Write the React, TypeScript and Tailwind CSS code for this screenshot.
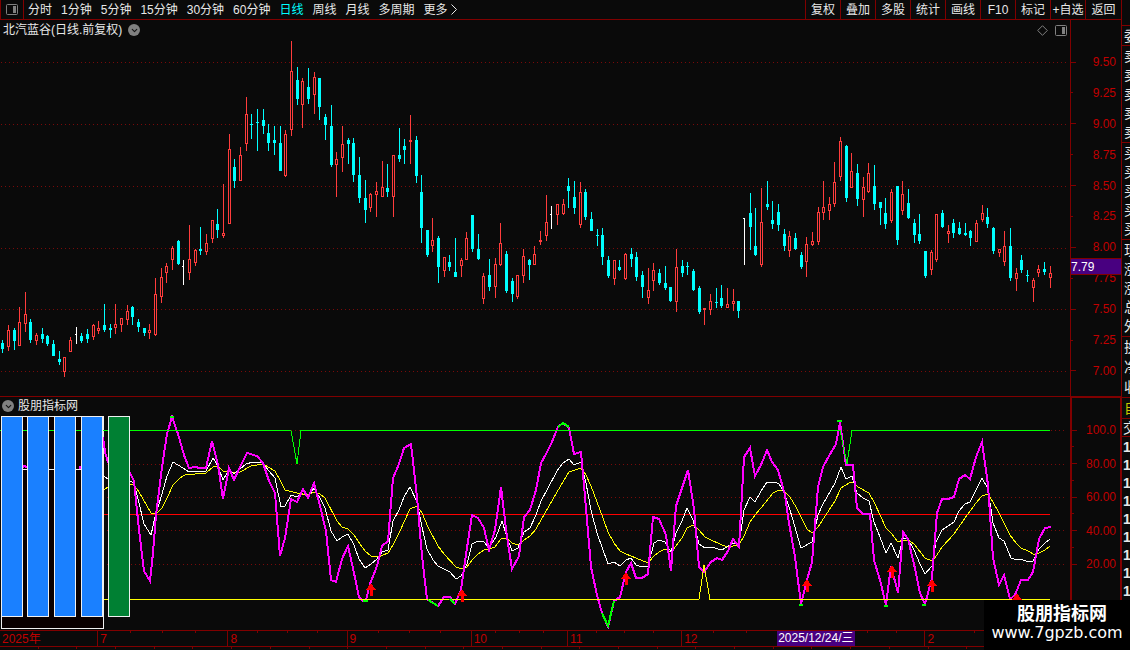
import { ChevronDown } from 'lucide-react';

type Kind = 'u' | 'd' | 'f';
type Candle = [Kind, number, number, number, number];

const periods = [
  '分时',
  '1分钟',
  '5分钟',
  '15分钟',
  '30分钟',
  '60分钟',
  '日线',
  '周线',
  '月线',
  '多周期',
  '更多',
];

const tools = ['复权', '叠加', '多股', '统计', '画线', 'F10', '标记', '+自选', '返回'];

const prices = ['9.50', '9.25', '9.00', '8.75', '8.50', '8.25', '8.00', '7.75', '7.50', '7.25', '7.00'];

const levels = ['100.0', '', '80.00', '', '60.00', '', '40.00', '', '20.00'];

// kind (up, down, flat), high, body top, body bottom, low
const candles: Candle[] = [
  ['d', 340, 343, 349, 353], ['u', 325, 330, 347, 351], ['d', 328, 330, 341, 350], ['u', 307, 322, 346, 346],
  ['u', 292, 314, 324, 332], ['d', 319, 322, 340, 343], ['u', 333, 335, 341, 345], ['d', 328, 334, 339, 343],
  ['d', 335, 336, 344, 346], ['d', 340, 344, 356, 356], ['d', 351, 359, 362, 365], ['u', 357, 357, 372, 377],
  ['u', 337, 340, 352, 352], ['f', 327, 334, 335, 344], ['d', 333, 336, 341, 343], ['d', 329, 334, 339, 343],
  ['u', 324, 325, 337, 340], ['u', 321, 328, 331, 334], ['d', 304, 325, 330, 332], ['d', 324, 328, 330, 338],
  ['u', 304, 324, 328, 334], ['u', 318, 318, 325, 332], ['u', 305, 311, 320, 325], ['d', 306, 307, 317, 325],
  ['d', 319, 322, 327, 332], ['d', 328, 328, 333, 336], ['u', 324, 330, 333, 339], ['u', 278, 294, 335, 336],
  ['u', 268, 277, 297, 303], ['u', 263, 266, 273, 283], ['u', 246, 248, 260, 270], ['d', 240, 241, 264, 265],
  ['f', 260, 266, 267, 285], ['u', 225, 259, 273, 280], ['u', 249, 250, 263, 266], ['d', 227, 249, 251, 255],
  ['u', 234, 243, 252, 255], ['u', 220, 220, 239, 243], ['d', 209, 224, 230, 238], ['u', 184, 233, 236, 238],
  ['u', 134, 149, 224, 224], ['d', 159, 167, 181, 188], ['u', 147, 155, 181, 181], ['u', 97, 114, 144, 151],
  ['d', 114, 124, 125, 139], ['d', 109, 122, 123, 151], ['d', 109, 120, 126, 134], ['d', 124, 133, 143, 151],
  ['d', 126, 140, 143, 155], ['d', 126, 143, 171, 171], ['u', 130, 134, 176, 177], ['u', 41, 71, 130, 136],
  ['d', 67, 80, 99, 105], ['u', 78, 81, 105, 128], ['d', 68, 87, 99, 104], ['u', 72, 77, 95, 114],
  ['d', 78, 78, 107, 120], ['d', 114, 117, 125, 140], ['d', 105, 126, 165, 167], ['u', 152, 159, 165, 197],
  ['u', 126, 144, 158, 172], ['d', 138, 140, 144, 164], ['d', 138, 143, 175, 182], ['d', 157, 175, 198, 203],
  ['d', 180, 198, 210, 223], ['u', 193, 194, 208, 212], ['u', 182, 191, 195, 217], ['u', 161, 187, 197, 197],
  ['d', 164, 188, 192, 197], ['u', 155, 155, 197, 217], ['d', 128, 155, 159, 162], ['d', 139, 146, 150, 164],
  ['u', 115, 140, 142, 164], ['d', 136, 140, 176, 183], ['d', 175, 192, 228, 243], ['d', 230, 230, 255, 257],
  ['u', 218, 240, 246, 252], ['d', 236, 238, 267, 283], ['u', 257, 257, 271, 277], ['d', 255, 262, 267, 271],
  ['d', 238, 272, 277, 277], ['u', 258, 260, 266, 277], ['u', 232, 238, 260, 260], ['d', 215, 215, 249, 252],
  ['d', 234, 249, 259, 260], ['u', 273, 276, 299, 304], ['d', 259, 275, 287, 291], ['u', 258, 264, 287, 298],
  ['u', 223, 243, 265, 266], ['d', 251, 254, 291, 293], ['d', 278, 281, 294, 302], ['u', 275, 275, 297, 299],
  ['u', 249, 256, 276, 283], ['d', 259, 260, 265, 280], ['u', 246, 254, 265, 265], ['u', 231, 240, 242, 245],
  ['u', 195, 222, 236, 241], ['f', 206, 214, 215, 229], ['u', 204, 204, 215, 225], ['u', 199, 204, 214, 215],
  ['d', 178, 186, 191, 208], ['d', 181, 197, 208, 214], ['u', 182, 192, 225, 228], ['d', 189, 192, 217, 220],
  ['d', 212, 219, 231, 231], ['d', 229, 235, 236, 246], ['d', 228, 235, 257, 265], ['d', 256, 260, 276, 278],
  ['u', 260, 260, 279, 285], ['d', 260, 267, 270, 271], ['u', 253, 254, 279, 280], ['d', 248, 254, 259, 267],
  ['d', 252, 257, 277, 281], ['d', 271, 275, 287, 298], ['u', 268, 290, 298, 304], ['u', 263, 270, 281, 291],
  ['d', 269, 273, 283, 285], ['d', 266, 283, 288, 290], ['d', 287, 287, 301, 302], ['u', 249, 267, 302, 312],
  ['d', 260, 266, 273, 277], ['d', 262, 266, 267, 275], ['d', 269, 271, 290, 291], ['d', 286, 288, 312, 314],
  ['u', 308, 308, 310, 325], ['u', 294, 301, 310, 315], ['d', 288, 302, 303, 308], ['d', 285, 298, 306, 308],
  ['u', 288, 304, 308, 308], ['u', 289, 301, 304, 311], ['d', 301, 301, 311, 318], ['f', 218, 218, 219, 265],
  ['d', 193, 213, 227, 250], ['d', 208, 246, 255, 256], ['u', 188, 222, 265, 267], ['d', 181, 204, 207, 210],
  ['d', 201, 220, 224, 229], ['d', 204, 212, 225, 231], ['d', 229, 234, 246, 251], ['u', 231, 236, 251, 257],
  ['d', 233, 238, 249, 250], ['d', 252, 255, 267, 269], ['u', 237, 244, 262, 277], ['u', 232, 241, 245, 246],
  ['u', 207, 212, 242, 245], ['u', 181, 207, 213, 220], ['u', 197, 204, 211, 220], ['u', 162, 182, 204, 207],
  ['u', 137, 141, 177, 181], ['d', 145, 146, 198, 202], ['u', 153, 171, 188, 188], ['d', 164, 173, 199, 206],
  ['u', 177, 187, 200, 217], ['u', 163, 173, 192, 193], ['d', 165, 186, 204, 210], ['d', 202, 202, 208, 225],
  ['d', 198, 213, 224, 229], ['u', 189, 192, 221, 223], ['d', 186, 186, 240, 245], ['u', 181, 194, 211, 215],
  ['d', 189, 203, 218, 219], ['d', 219, 223, 235, 243], ['d', 214, 234, 241, 244], ['d', 251, 251, 276, 278],
  ['u', 250, 252, 270, 275], ['u', 214, 214, 260, 262], ['d', 210, 213, 227, 228], ['u', 225, 231, 234, 243],
  ['d', 219, 223, 233, 238], ['d', 222, 228, 234, 235], ['d', 223, 233, 235, 236], ['d', 230, 231, 238, 246],
  ['u', 220, 223, 242, 242], ['u', 205, 213, 220, 222], ['d', 208, 217, 224, 228], ['d', 227, 228, 251, 254],
  ['u', 249, 249, 253, 257], ['u', 231, 246, 262, 266], ['d', 228, 246, 278, 281], ['u', 268, 273, 279, 291],
  ['d', 255, 260, 270, 273], ['d', 270, 275, 276, 282], ['u', 278, 280, 288, 302], ['u', 265, 269, 273, 277],
  ['d', 262, 269, 272, 275], ['u', 266, 273, 278, 288],
];

const fast =
  '103,437 105,452 108,462 130,473 134,481 139,530 144,571 150,581 153,553 156,515 162,467 167,434 172,417 178,434 184,455 189,468 195,467 200,468 206,468 212,441 218,465 223,499 229,468 234,480 240,467 247,453 257,456 263,463 269,481 275,493 280,556 285,538 291,499 297,502 303,489 308,498 314,483 320,506 326,531 331,580 336,582 342,559 348,546 354,573 359,597 363,601 366,600 370,584 377,566 382,546 388,541 393,478 399,464 404,448 411,444 417,497 422,556 427,599 433,603 438,606 444,597 450,597 455,604 461,590 467,548 472,515 478,518 484,528 489,550 495,530 501,487 507,537 512,569 519,556 524,517 530,510 536,490 541,463 546,454 552,442 558,427 563,423 569,428 574,454 581,452 586,508 591,567 597,595 602,613 608,627 614,601 620,597 626,572 631,563 636,578 642,578 648,574 653,517 659,519 666,535 671,571 676,506 682,488 688,470 694,509 699,567 704,572 711,562 717,558 722,560 728,551 733,539 739,547 744,457 750,448 755,476 761,465 767,450 772,462 778,470 785,495 789,523 795,557 801,604 807,580 812,562 818,487 823,467 829,456 836,444 840,422 846,465 853,465 857,508 863,514 870,514 874,560 880,580 886,605 891,566 898,593 903,532 908,539 914,564 920,593 925,604 932,578 937,513 942,499 948,499 954,497 959,479 965,475 970,479 976,457 982,442 988,485 993,558 999,585 1004,575 1010,599 1015,595 1021,580 1028,580 1033,572 1039,539 1045,528 1051,527';

const middle =
  '103,475 105,477 108,479 130,481 134,483 139,503 144,524 151,535 155,517 162,494 167,476 173,462 183,468 189,472 206,471 213,458 218,466 223,480 229,470 234,474 246,464 253,462 263,463 269,471 275,478 281,507 285,506 291,495 297,497 303,491 308,497 314,488 320,498 325,508 331,531 337,541 342,537 348,534 354,545 359,559 365,568 371,564 377,559 382,552 388,550 393,521 399,510 404,497 410,487 417,502 422,527 427,549 433,560 438,566 444,569 450,572 456,579 461,576 467,564 472,544 478,541 484,542 489,548 496,537 502,521 507,537 512,551 518,548 524,532 530,528 536,515 541,501 547,490 557,471 563,463 569,459 574,465 581,462 586,483 591,510 597,533 608,564 614,562 620,566 626,560 631,558 636,565 642,567 648,566 654,543 659,540 665,542 671,552 676,533 682,521 687,508 693,520 699,544 705,548 711,547 722,550 733,543 739,545 744,510 750,497 755,502 761,491 767,482 775,482 779,484 784,492 790,510 801,548 812,542 818,515 823,504 835,483 841,467 846,479 852,476 857,493 863,498 869,501 874,522 880,537 886,553 891,543 898,558 903,538 908,539 914,550 920,564 925,574 932,566 936,542 942,530 954,522 959,511 965,504 970,502 982,478 988,489 993,523 999,538 1004,541 1011,558 1017,560 1021,559 1028,562 1033,561 1039,549 1045,543 1050,539';

const slow =
  '104,490 108,487 130,484 134,485 139,492 151,513 156,514 162,508 167,498 173,485 180,478 185,475 206,473 213,467 218,466 223,471 229,471 234,473 240,472 251,466 263,464 275,471 281,482 285,490 297,493 308,495 314,492 320,494 325,498 337,521 342,527 348,529 354,535 360,544 365,551 371,556 378,557 388,553 393,545 400,531 410,509 417,506 422,513 428,527 438,546 444,554 456,567 462,569 467,567 472,560 478,554 484,550 489,549 495,547 501,539 507,538 512,543 518,545 524,540 530,536 536,529 541,520 557,492 569,472 581,468 586,475 591,486 597,502 603,518 608,532 614,543 620,551 626,554 631,556 636,558 648,563 654,556 659,552 665,549 671,552 676,546 682,538 687,528 693,525 699,530 705,537 711,540 722,545 728,547 739,545 744,536 750,522 755,515 761,508 773,493 779,490 784,491 790,497 796,507 807,529 812,533 818,527 835,501 841,488 849,483 853,482 858,487 869,493 875,504 886,528 892,534 898,542 903,540 908,540 914,544 925,558 932,561 937,555 942,547 954,534 965,518 976,503 982,496 988,494 993,502 999,513 1010,535 1016,543 1021,548 1028,551 1035,555 1045,550 1050,546';

const extremes = [
  '170,417 174,417',
  '363,601 368,601',
  '428,600 433,603 438,606',
  '450,599 455,604',
  '558,427 563,423 569,427',
  '602,613 608,626 614,601',
  '799,605 803,605',
  '837,421 842,421',
  '884,606 888,606',
  '922,605 926,605',
];

const arrows = [
  [371, 584],
  [462, 590],
  [626, 573],
  [807, 580],
  [892, 566],
  [932, 580],
  [1017, 594],
];

const months = [
  { label: '2025年', grow: 'grow-98 basis-0' },
  { label: '7', grow: 'grow-130 basis-0' },
  { label: '8', grow: 'grow-119 basis-0' },
  { label: '9', grow: 'grow-124 basis-0' },
  { label: '10', grow: 'grow-96 basis-0' },
  { label: '11', grow: 'grow-114 basis-0' },
  { label: '12', grow: 'grow-129 basis-0' },
  { label: '', grow: 'grow-114 basis-0' },
  { label: '2', grow: 'grow-197 basis-0' },
];

const quoteRows = [
  { labels: ['委'], height: 'h-5' },
  { labels: ['卖', '卖', '卖', '卖', '卖'], height: 'h-[97px]' },
  { labels: ['买', '买', '买', '买', '买'], height: 'h-[97px]' },
  { labels: ['现', '涨', '涨', '总', '外'], height: 'h-[97px]' },
  { labels: ['换', '净', '收'], height: 'h-[61px]' },
];

const PanelIcon = () => (
  <svg className="h-[11px] w-3" viewBox="0 0 12 11" fill="none" aria-hidden="true">
    <rect x="0.5" y="0.5" width="11" height="10" rx="1" stroke="currentColor" />
    <rect x="7" y="2" width="3" height="7" fill="currentColor" />
  </svg>
);

const Toggle = ({ label }: { label: string }) => (
  <button
    aria-label={label}
    className="flex size-3 shrink-0 items-center justify-center rounded-full bg-[#808080] text-[#141414]"
  >
    <ChevronDown size={9} strokeWidth={3} />
  </button>
);

const Toolbar = () => (
  <header className="flex h-5 justify-between border-b border-l border-[#800000] text-[#e8e8e8]">
    <nav className="flex items-center whitespace-nowrap">
      <button
        aria-label="侧栏"
        className="mr-1 flex h-full w-[23px] items-center justify-center border-r border-[#800000] text-[#808080]"
      >
        <PanelIcon />
      </button>
      <div className="flex items-center gap-[9px] leading-4">
        {periods.map((period) => (
          <button
            key={period}
            className={period === '日线' ? 'text-[#00ffff]' : ''}
          >
            {period}
          </button>
        ))}
      </div>
      <svg className="ml-[3px] h-[11px] w-1.5" viewBox="0 0 6 11" fill="none" aria-hidden="true">
        <path d="M0.5 0.5 5.5 5.5 0.5 10.5" stroke="currentColor" />
      </svg>
    </nav>
    <div className="flex whitespace-nowrap">
      {tools.map((tool) => (
        <button
          key={tool}
          className="w-[35px] border-l border-[#800000] leading-4 last:w-9"
        >
          {tool}
        </button>
      ))}
    </div>
  </header>
);

const GridLine = ({ y, from }: { y: number; from: number }) => (
  <line x1={from} x2="1067" y1={y + 0.5} y2={y + 0.5} stroke="#7a0a0a" strokeDasharray="1 3" />
);

const CandleMark = ({ candle, index }: { candle: Candle; index: number }) => {
  const [kind, high, top, bottom, low] = candle;
  const x = Math.floor(2.68 + index * 5.662);

  if (kind === 'f') {
    return (
      <g fill="#ffffff">
        <rect x={x} y={high} width="1" height={low - high} />
        <rect x={x - 1} y={top} width="1" height="1" />
      </g>
    );
  }

  return (
    <g fill={kind === 'u' ? '#ff3c3c' : '#00ffff'}>
      <rect x={x} y={high} width="1" height={low - high} />
      <rect x={x - 1} y={top} width="3" height={bottom - top} />
      {kind === 'u' && bottom - top > 2 && (
        <rect x={x} y={top + 1} width="1" height={bottom - top - 2} fill="#0a0a0a" />
      )}
    </g>
  );
};

const PricePanel = () => (
  <section className="flex border-b border-[#800000]">
    <div className="min-w-0 flex-1">
      <div className="flex h-5 items-center justify-between px-[3px] text-[#e8e8e8]">
        <div className="flex items-center gap-1.5">
          <h1 className="whitespace-nowrap leading-4">北汽蓝谷(日线.前复权)</h1>
          <Toggle label="主图指标" />
        </div>
        <div className="flex items-center gap-[7px] text-[#808080]">
          <svg className="size-[11px]" viewBox="0 0 11 11" fill="none" aria-hidden="true">
            <path d="M5.5 0.7 10.3 5.5 5.5 10.3 0.7 5.5z" stroke="currentColor" />
          </svg>
          <PanelIcon />
        </div>
      </div>
      <svg
        className="block h-[356px] w-full"
        viewBox="0 40 1070 356"
        preserveAspectRatio="none"
        shapeRendering="crispEdges"
        role="img"
        aria-label="日线"
      >
        {[62, 124, 186, 248, 309, 371].map((y) => (
          <GridLine key={y} y={y} from={1} />
        ))}
        {candles.map((candle, index) => (
          <CandleMark key={index} candle={candle} index={index} />
        ))}
      </svg>
    </div>
    <div className="relative w-[51px] border-l border-[#800000] pt-[34px]">
      <ul className="flex h-[325px] flex-col justify-between text-[#c00000]">
        {prices.map((price, index) => (
          <li key={price} className="flex h-4 items-center justify-between pr-[5px] leading-4">
            <span className={index % 2 ? 'h-px w-0.5 bg-[#800000]' : 'h-px w-[5px] bg-[#800000]'} />
            {price}
          </li>
        ))}
      </ul>
      <div className="absolute top-[238px] left-0 h-[17px] w-full border-y border-[#800000] bg-[#480080] leading-4 text-white">
        7.79
      </div>
    </div>
  </section>
);

const IndicatorChart = () => (
  <svg
    className="block h-[215px] w-full"
    viewBox="0 415 1070 215"
    preserveAspectRatio="none"
    shapeRendering="crispEdges"
    fill="none"
    role="img"
    aria-label="股朋指标网"
  >
    {[430, 464, 497, 530, 564].map((y) => (
      <GridLine key={y} y={y} from={103} />
    ))}
    <rect x="1.5" y="416.5" width="102" height="212" fill="#0a0000" stroke="#f0f0f0" />
    <path d="M1 469.5H103" stroke="#f0f0f0" />
    <path d="M22 467 25 466 28 468M80 466V469" stroke="#ff00ff" strokeWidth="2" />
    <path d="M104 514.5H1050" stroke="#ff0000" />
    <polyline points={slow} stroke="#ffff00" />
    <polyline points={middle} stroke="#ffffff" />
    <polyline points={fast} stroke="#ff00ff" strokeWidth="2" />
    <path d="M0 430.5H291L297 464 301 430.5H840L847 464 852 430.5H1050" stroke="#00ff00" />
    <path d="M104 599.5H699L704 565 710 599.5H1050" stroke="#ffff00" />
    {extremes.map((points) => (
      <polyline key={points} points={points} stroke="#00ff00" strokeWidth="2" />
    ))}
    {arrows.map(([x, y]) => (
      <path key={x} d={`M${x} ${y - 1}l5 7h-3v6h-3v-6h-4z`} fill="#ff0000" />
    ))}
    {[1, 27, 54, 81].map((x) => (
      <rect key={x} x={x + 0.5} y="416.5" width="21" height="200" fill="#1a80ff" stroke="#f0f0f0" />
    ))}
    <rect x="108.5" y="416.5" width="21" height="200" fill="#008033" stroke="#f0f0f0" />
  </svg>
);

const IndicatorPanel = () => (
  <section className="flex">
    <div className="min-w-0 flex-1">
      <div className="flex h-[18px] items-center gap-1 pl-0.5 text-[#e8e8e8]">
        <Toggle label="副图指标" />
        <h2 className="leading-4">股朋指标网</h2>
      </div>
      <IndicatorChart />
    </div>
    <div className="w-[51px] border-t border-r border-l-2 border-[#800000] pt-6">
      <ul className="flex h-[150px] flex-col justify-between text-[#c00000]">
        {levels.map((level, index) => (
          <li key={index} className="flex h-4 items-center justify-between pr-1 leading-4">
            <span className={level ? 'h-px w-[5px] bg-[#800000]' : 'h-px w-0.5 bg-[#800000]'} />
            {level}
          </li>
        ))}
      </ul>
    </div>
  </section>
);

const DateAxis = () => (
  <footer className="relative flex h-[17px] border-y border-[#800000] text-[#c00000]">
    {months.map(({ label, grow }, index) => (
      <div
        key={index}
        className={`${grow} relative min-w-0 border-l border-[#800000] leading-4 first:border-l-0`}
      >
        {index > 0 && (
          <div className="absolute inset-x-0 top-0 flex justify-evenly">
            <span className="h-0.5 w-px bg-[#800000]" />
            <span className="h-0.5 w-px bg-[#800000]" />
            <span className="h-0.5 w-px bg-[#800000]" />
          </div>
        )}
        <span className="px-0.5">{label}</span>
      </div>
    ))}
    <time
      dateTime="2025-12-24"
      className="absolute top-0 left-[69.3%] h-[15px] w-[78px] bg-[#480080] text-center leading-[14px] whitespace-nowrap text-white"
    >
      2025/12/24/三
    </time>
  </footer>
);

const QuoteStrip = () => (
  <aside className="w-[9px] shrink-0 overflow-hidden border-l border-[#800000] pt-[25px] text-sm text-[#e8e8e8]">
    {quoteRows.map(({ labels, height }) => (
      <div
        key={labels[0]}
        className={`${height} flex flex-col justify-around border-t border-[#800000] pl-0.5`}
      >
        {labels.map((label, index) => (
          <div key={index} className="w-4 leading-4">
            {label}
          </div>
        ))}
      </div>
    ))}
    <div className="h-[21px] border-t border-[#800000] pl-0.5 text-[#c8c800]">
      <div className="w-4 leading-5">自</div>
    </div>
    <div className="h-[19px] border-y border-[#800000] pl-px">
      <div className="w-4 leading-[18px]">交</div>
    </div>
    {Array.from({ length: 9 }, (_, index) => (
      <div key={index} className="h-[18px] pl-px font-bold leading-5">
        1
      </div>
    ))}
  </aside>
);

const Watermark = () => (
  <div className="absolute right-0 bottom-0 flex h-[50px] w-[146px] flex-col items-center bg-black pt-0.5 whitespace-nowrap text-white">
    <strong className="pl-2.5 text-lg leading-6 font-bold">股朋指标网</strong>
    <a
      href="#"
      className="font-['DejaVu_Sans',sans-serif] text-base leading-[14px]"
    >
      www.7gpzb.com
    </a>
  </div>
);

export default function App() {
  return (
    <div className="relative flex min-h-screen overflow-hidden bg-[#0a0a0a] font-['Liberation_Sans','Noto_Sans_CJK_SC',sans-serif] text-xs">
      <main className="flex min-w-0 flex-1 flex-col">
        <Toolbar />
        <PricePanel />
        <IndicatorPanel />
        <DateAxis />
        <div className="flex h-[3px] justify-evenly">
          {Array.from({ length: 28 }, (_, index) => (
            <span key={index} className="h-0.5 w-px bg-[#800000]" />
          ))}
        </div>
      </main>
      <QuoteStrip />
      <Watermark />
    </div>
  );
}
